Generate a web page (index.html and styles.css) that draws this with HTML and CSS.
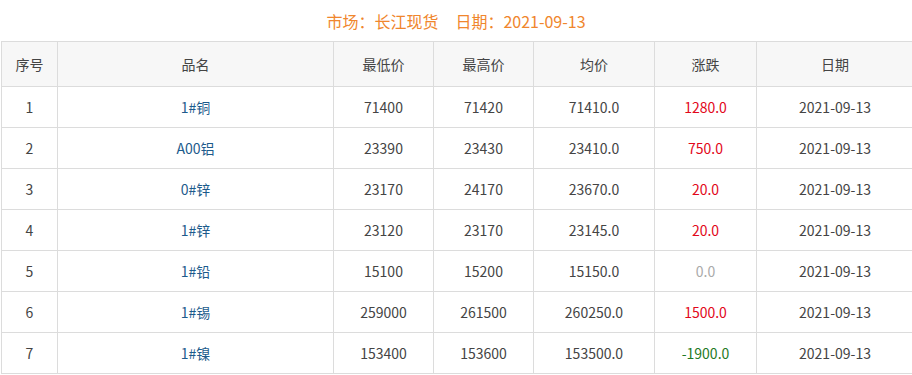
FILE: index.html
```html
<!DOCTYPE html>
<html lang="zh-CN">
<head>
    <meta charset="UTF-8">
    <meta name="viewport" content="width=device-width, initial-scale=1.0">
    <title>长江现货 2021-09-13</title>
    <link rel="stylesheet" href="styles.css">
</head>

<body>
    <!-- market title -->
    <div class="market-title">市场：长江现货<span class="date">日期：2021-09-13</span></div>

    <table class="price-table">
        <thead>
            <tr>
                <th class="col-no">序号</th>
                <th class="col-name">品名</th>
                <th class="col-low">最低价</th>
                <th class="col-high">最高价</th>
                <th class="col-avg">均价</th>
                <th class="col-chg">涨跌</th>
                <th class="col-date">日期</th>
            </tr>
        </thead>
        <tbody>
            <tr>
                <td>1</td>
                <td><a href="#" class="name">1#铜</a></td>
                <td>71400</td>
                <td>71420</td>
                <td>71410.0</td>
                <td class="up">1280.0</td>
                <td>2021-09-13</td>
            </tr>
            <tr>
                <td>2</td>
                <td><a href="#" class="name">A00铝</a></td>
                <td>23390</td>
                <td>23430</td>
                <td>23410.0</td>
                <td class="up">750.0</td>
                <td>2021-09-13</td>
            </tr>
            <tr>
                <td>3</td>
                <td><a href="#" class="name">0#锌</a></td>
                <td>23170</td>
                <td>24170</td>
                <td>23670.0</td>
                <td class="up">20.0</td>
                <td>2021-09-13</td>
            </tr>
            <tr>
                <td>4</td>
                <td><a href="#" class="name">1#锌</a></td>
                <td>23120</td>
                <td>23170</td>
                <td>23145.0</td>
                <td class="up">20.0</td>
                <td>2021-09-13</td>
            </tr>
            <tr>
                <td>5</td>
                <td><a href="#" class="name">1#铅</a></td>
                <td>15100</td>
                <td>15200</td>
                <td>15150.0</td>
                <td class="flat">0.0</td>
                <td>2021-09-13</td>
            </tr>
            <tr>
                <td>6</td>
                <td><a href="#" class="name">1#锡</a></td>
                <td>259000</td>
                <td>261500</td>
                <td>260250.0</td>
                <td class="up">1500.0</td>
                <td>2021-09-13</td>
            </tr>
            <tr>
                <td>7</td>
                <td><a href="#" class="name">1#镍</a></td>
                <td>153400</td>
                <td>153600</td>
                <td>153500.0</td>
                <td class="down">-1900.0</td>
                <td>2021-09-13</td>
            </tr>
        </tbody>
    </table>
</body>
</html>
```

FILE: styles.css
```css
body {
    font-family: 'Microsoft YaHei', 'Noto Sans CJK SC', sans-serif;
    background-color: #fff;
    margin: 0;
    padding: 0;
    overflow: hidden;
    color: #444;
}

.market-title {
    text-align: center;
    color: #f0862d;
    font-size: 16px;
    height: 41px;
    line-height: 43px;
}

.market-title .date {
    margin-left: 17px;
}

.price-table {
    border-collapse: collapse;
    table-layout: fixed;
    width: 913px;
    margin-left: 1px;
    font-size: 14px;
}

.price-table th,
.price-table td {
    border: 1px solid #dcdcdc;
    text-align: center;
    padding: 0;
    font-weight: normal;
}

.price-table th {
    background-color: #f7f7f7;
    color: #444;
    height: 44px;
}

.price-table td {
    height: 40px;
}

.col-no { width: 55px; }
.col-name { width: 275px; }
.col-low { width: 99px; }
.col-high { width: 99px; }
.col-avg { width: 120px; }
.col-chg { width: 101px; }

.name {
    color: #1d5b8c;
    text-decoration: none;
}

.up {
    color: #e2071a;
}

.down {
    color: #1f7a25;
}

.flat {
    color: #aaa;
}
```
